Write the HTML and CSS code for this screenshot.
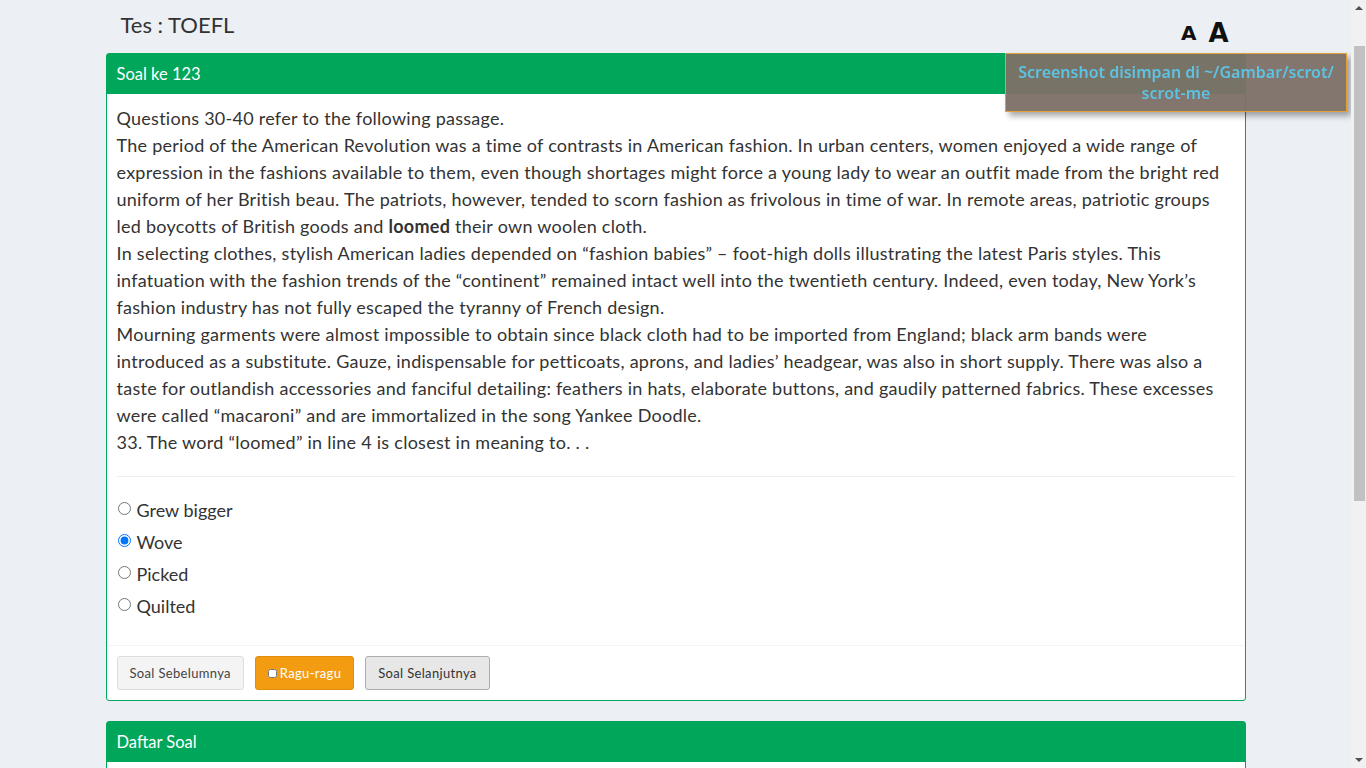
FILE: index.html
```html
<!DOCTYPE html>
<html lang="id">
<head>
<meta charset="utf-8">
<title>Tes : TOEFL</title>
<link rel="stylesheet" href="styles.css">
</head>
<body>
<div class="container">
  <div class="top-row">
    <h3 class="page-title">Tes : TOEFL</h3>
    <div class="font-size">
      <a class="fs-small" href="#">A</a>
      <a class="fs-big" href="#">A</a>
    </div>
  </div>

  <div class="panel">
    <div class="panel-heading">Soal ke 123</div>
    <div class="panel-body">
      <p class="passage">Questions 30-40 refer to the following passage.<br>The period of the American Revolution was a time of contrasts in American fashion. In urban centers, women enjoyed a wide range of<br>expression in the fashions available to them, even though shortages might force a young lady to wear an outfit made from the bright red<br>uniform of her British beau. The patriots, however, tended to scorn fashion as frivolous in time of war. In remote areas, patriotic groups<br>led boycotts of British goods and <b>loomed</b> their own woolen cloth.<br>In selecting clothes, stylish American ladies depended on “fashion babies” – foot-high dolls illustrating the latest Paris styles. This<br>infatuation with the fashion trends of the “continent” remained intact well into the twentieth century. Indeed, even today, New York’s<br>fashion industry has not fully escaped the tyranny of French design.<br>Mourning garments were almost impossible to obtain since black cloth had to be imported from England; black arm bands were<br>introduced as a substitute. Gauze, indispensable for petticoats, aprons, and ladies’ headgear, was also in short supply. There was also a<br>taste for outlandish accessories and fanciful detailing: feathers in hats, elaborate buttons, and gaudily patterned fabrics. These excesses<br>were called “macaroni” and are immortalized in the song Yankee Doodle.<br>33. The word “loomed” in line 4 is closest in meaning to. . .</p>
      <hr class="divider">
      <div class="options">
        <label class="option"><input type="radio" name="jawab"> Grew bigger</label>
        <label class="option"><input type="radio" name="jawab" checked> Wove</label>
        <label class="option"><input type="radio" name="jawab"> Picked</label>
        <label class="option"><input type="radio" name="jawab"> Quilted</label>
      </div>
    </div>
    <div class="panel-footer">
      <button class="btn btn-default">Soal Sebelumnya</button>
      <button class="btn btn-warning"><input type="checkbox" class="ragu-check">Ragu-ragu</button>
      <button class="btn btn-active">Soal Selanjutnya</button>
    </div>
  </div>

  <div class="panel panel-list">
    <div class="panel-heading">Daftar Soal</div>
    <div class="panel-body list-body"></div>
  </div>
</div>

<div class="notify">Screenshot disimpan di ~/Gambar/scrot/<br>scrot-me</div>

<div class="scrollbar">
  <span class="sb-arrow sb-up"></span>
  <span class="sb-thumb"></span>
  <span class="sb-arrow sb-down"></span>
</div>
</body>
</html>
```

FILE: styles.css
```css
html, body {
  margin: 0;
  padding: 0;
}
body {
  background: #ecf0f5;
  color: #333;
  font-family: "Lato", "Liberation Sans", sans-serif;
  padding-right: 15px;
}
.container {
  width: 1140px;
  margin: 0 auto;
  padding: 0 15px;
}
.top-row {
  display: flex;
  justify-content: space-between;
  align-items: flex-start;
  height: 53px;
  padding: 0 17px 0 15px;
}
.page-title {
  margin: 12px 0 0 0;
  font-size: 22px;
  font-weight: 400;
  line-height: 26px;
  color: #333;
}
.font-size {
  display: flex;
  align-items: center;
  gap: 12px;
  height: 30px;
  margin-top: 18px;
  font-family: "DejaVu Sans", sans-serif;
  font-weight: 700;
  line-height: 30px;
}
.font-size a {
  color: #111;
  text-decoration: none;
}
.fs-small { font-size: 20px; }
.fs-big { font-size: 26px; }

.panel {
  background: #fff;
  border: 1px solid #00a65a;
  border-radius: 3px;
  margin-bottom: 20px;
}
.panel-heading {
  background: #00a65a;
  color: #fff;
  height: 40px;
  line-height: 40px;
  padding: 0 10px;
  font-size: 16.5px;
}
.panel-body {
  padding: 11px 10px 10px;
}
.passage {
  margin: 0;
  font-size: 18px;
  line-height: 27px;
  letter-spacing: 0.26px;
  white-space: nowrap;
}
.divider {
  border: 0;
  border-top: 1px solid #eee;
  margin: 20px 0 0 0;
}
.options {
  display: flex;
  flex-direction: column;
  padding-top: 17px;
  padding-bottom: 13px;
}
.option {
  height: 32px;
  line-height: 32px;
  font-size: 18px;
  display: flex;
  align-items: center;
}
.option input {
  margin: 0 6px 4px 1px;
  width: 13px;
  height: 13px;
}
.panel-footer {
  border-top: 1px solid #f4f4f4;
  padding: 10px;
  display: flex;
  gap: 11px;
}
.btn {
  height: 34px;
  padding: 0 12px;
  font-family: "Lato", sans-serif;
  font-size: 13px;
  letter-spacing: 0.33px;
  border-radius: 3px;
  border: 1px solid #ddd;
  color: #444;
  display: flex;
  align-items: center;
}
.btn-default { background: #f4f4f4; }
.btn-warning {
  background: #f39c12;
  border-color: #e08e0b;
  color: #fff;
}
.btn-active {
  background: #e7e7e7;
  border-color: #adadad;
  color: #333;
}
.ragu-check {
  margin: 0 3px 0 0;
  width: 9px;
  height: 9px;
}
.list-body {
  height: 460px;
}

.notify {
  position: fixed;
  top: 53px;
  right: 19px;
  width: 340px;
  padding: 8px 0 7px;
  background: rgba(125, 112, 104, 0.96);
  border: 1px solid #e2a03a;
  color: #5ec2e2;
  font-family: "Noto Sans", sans-serif;
  font-weight: 600;
  font-size: 16px;
  line-height: 21px;
  text-align: center;
  box-shadow: 4px 4px 6px rgba(0, 0, 0, 0.35);
}

.scrollbar {
  position: fixed;
  top: 0;
  right: 0;
  width: 15px;
  height: 100vh;
  background: #f1f1f1;
  display: flex;
  flex-direction: column;
  align-items: center;
}
.sb-arrow {
  width: 0;
  height: 0;
  border-left: 4px solid transparent;
  border-right: 4px solid transparent;
}
.sb-up {
  margin-top: 6px;
  border-bottom: 4px solid #505050;
}
.sb-down {
  margin-top: auto;
  margin-bottom: 6px;
  border-top: 4px solid #505050;
}
.sb-thumb {
  width: 11px;
  height: 455px;
  margin-top: 36px;
  background: #c1c1c1;
  margin-left: 1px;
}
```
